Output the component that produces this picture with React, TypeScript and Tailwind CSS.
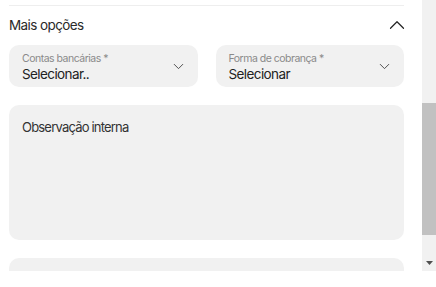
import { ChevronDown, ChevronUp } from "lucide-react";

// Collapsible "more options" block inside a scroll panel
function SelectField({ label, value }: { label: string; value: string }) {
  return (
    <div className="flex-1 h-[42px] rounded-[10px] bg-[#f1f1f1] pl-[13px] pr-[11px] flex items-center justify-between">
      <div className="flex flex-col pt-[3px]">
        <span className="text-[10.5px] leading-[12px] tracking-[-0.5px] text-[#8a8a8a]">{label}</span>
        <span className="text-[13.5px] leading-[18px] tracking-[-0.6px] text-[#222]">{value}</span>
      </div>
      <ChevronDown size={17} strokeWidth={1.3} className="text-[#444]" />
    </div>
  );
}

export default function App() {
  return (
    <div className="w-[436px] h-[287px] bg-white" style={{ fontFamily: "Inter, 'Noto Sans', sans-serif" }}>
      <div className="flex h-[271px] overflow-hidden">
        <div className="w-[422px] pl-[9px] pr-[18px]">
          <div className="mt-[5px] border-t border-[#eeeeee]" />
          <div className="flex items-center justify-between h-[38px] pt-[1px] -mr-[6px]">
            <span className="text-[13.5px] tracking-[-0.6px] text-[#2a2a2a]">Mais opções</span>
            <ChevronUp size={26} strokeWidth={1.1} className="text-[#222] -mt-[1px]" />
          </div>
          <div className="flex gap-[18px] mt-[1px]">
            <SelectField label="Contas bancárias *" value="Selecionar.." />
            <SelectField label="Forma de cobrança *" value="Selecionar" />
          </div>
          <div className="mt-[18px] h-[135px] rounded-[10px] bg-[#f1f1f1] px-[13px] pt-[9px]">
            <span className="text-[13px] tracking-[-0.8px] text-[#333]">Observação interna</span>
          </div>
          <div className="mt-[18px] h-[40px] rounded-[10px] bg-[#f1f1f1]" />
        </div>
        <div className="w-[14px] bg-[#f1f1f1] flex flex-col">
          <div className="h-[103px]" />
          <div className="h-[132px] bg-[#c1c1c1]" />
          <div className="flex-1 flex items-end justify-center pb-[6px]">
            <svg width="7" height="4" viewBox="0 0 7 4">
              <path d="M0 0 H7 L3.5 4 Z" fill="#505050" />
            </svg>
          </div>
        </div>
      </div>
    </div>
  );
}
